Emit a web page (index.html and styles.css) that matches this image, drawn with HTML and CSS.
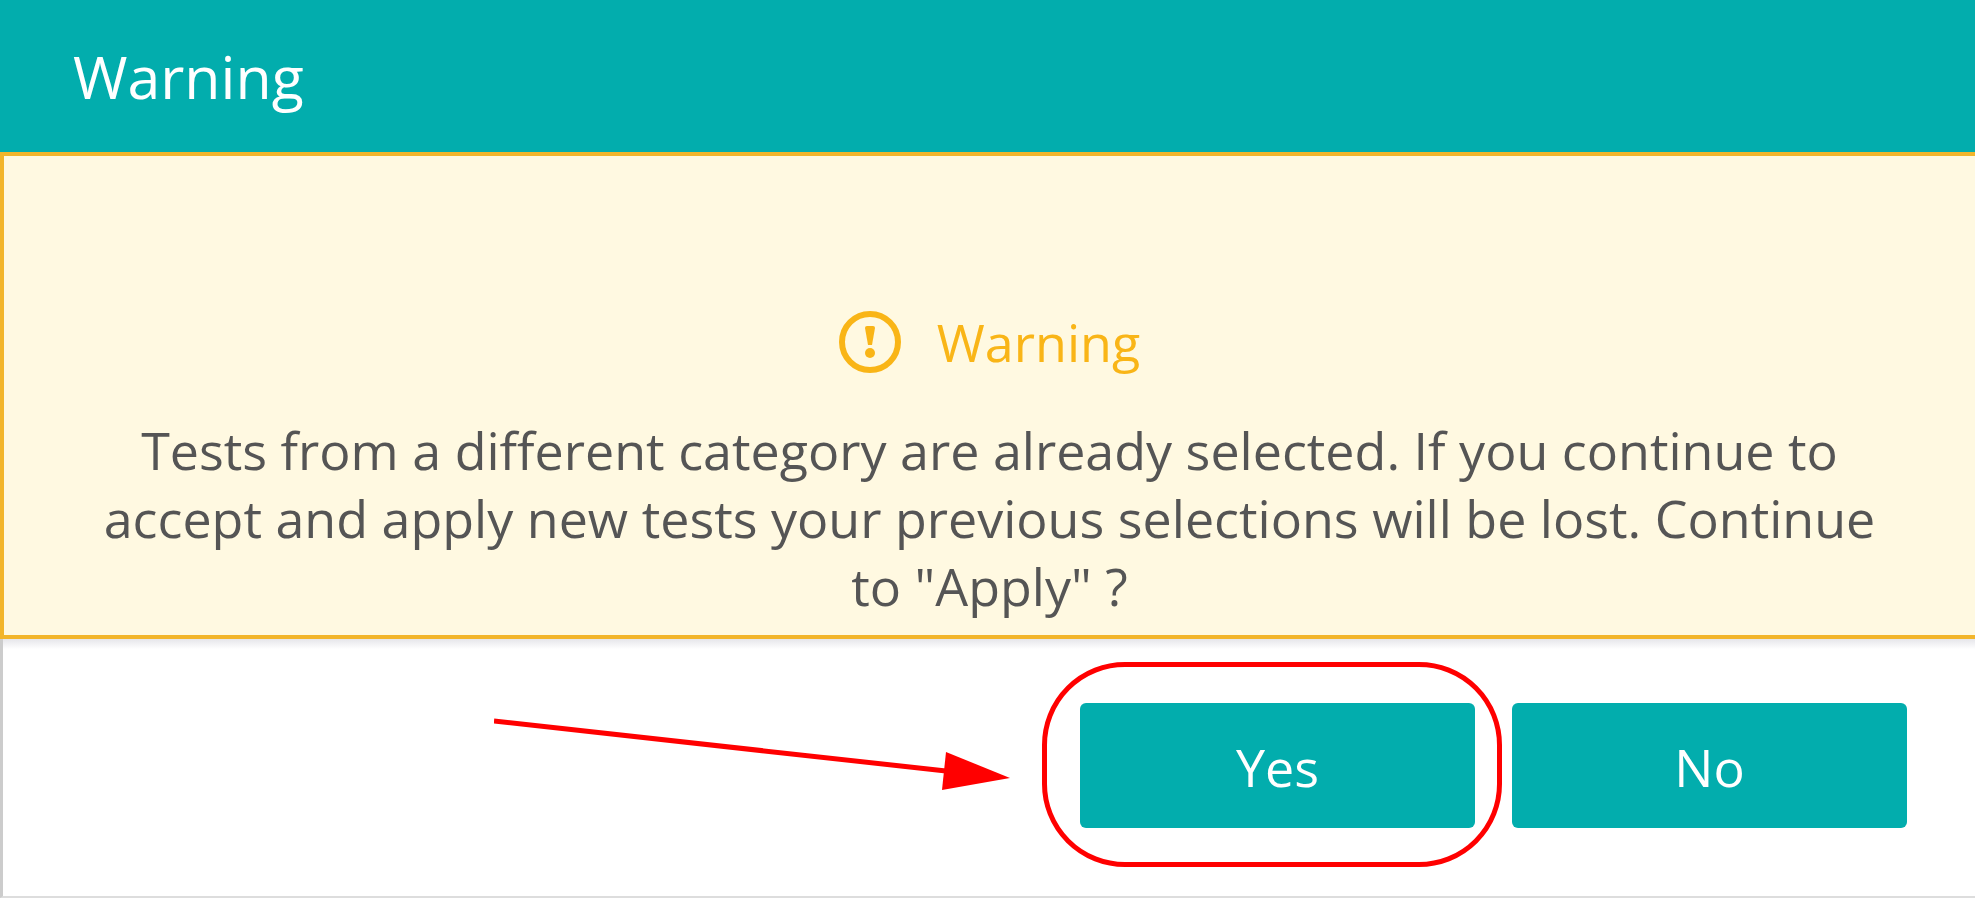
FILE: index.html
```
<!DOCTYPE html>
<html lang="en">
<head>
    <meta charset="UTF-8">
    <meta name="viewport" content="width=device-width, initial-scale=1.0">
    <title>Warning</title>
    <link rel="stylesheet" href="styles.css">
</head>
<body>
    <div class="dialog" role="alertdialog" aria-labelledby="dialog-title" aria-describedby="dialog-message">
        <header class="dialog-header">
            <h1 id="dialog-title">Warning</h1>
        </header>

        <main class="dialog-body">
            <h2 class="alert-title">
                <svg class="alert-icon" viewBox="0 0 62 62" aria-hidden="true">
                    <circle cx="31" cy="31" r="28" fill="none" stroke="currentColor" stroke-width="6"/>
                    <path d="M26 17 Q26 15 28 15 H34 Q36 15 36 17 L33 34 H29 Z" fill="currentColor"/>
                    <circle cx="31" cy="42" r="5" fill="currentColor"/>
                </svg>
                Warning
            </h2>
            <p id="dialog-message" class="alert-message">Tests from a different category are already selected. If you continue to accept and apply new tests your previous selections will be lost. Continue to "Apply" ?</p>
        </main>

        <footer class="dialog-footer">
            <div class="highlight">
                <button type="button" class="btn">Yes</button>
                <span class="highlight-ring"></span>
                <svg class="highlight-arrow" viewBox="0 0 516 72" aria-hidden="true">
                    <path d="M0 3 L452 53" fill="none" stroke="#ff0000" stroke-width="5"/>
                    <path d="M452 34 L516 60 L448 72 Z" fill="#ff0000"/>
                </svg>
            </div>
            <button type="button" class="btn">No</button>
        </footer>
    </div>
</body>
</html>
```
FILE: styles.css
```
* {
    box-sizing: border-box;
}

body {
    margin: 0;
    font-family: 'Open Sans', 'Noto Sans', sans-serif;
    font-size: 52px;
    line-height: 68px;
    color: #555;
    background: #fff;
}

.dialog {
    display: flex;
    flex-direction: column;
    min-height: 100vh;
}

.dialog-header {
    padding: 36px 73px;
    background: #02adad;
    color: #fff;
}

h1 {
    margin: 0;
    font-size: 59px;
    line-height: 80px;
    font-weight: 400;
}

.dialog-body {
    padding: 152px 90px 15px;
    background: #fff9e1;
    border: 4px solid #f2b52b;
    border-right: none;
    text-align: center;
}

.alert-title {
    display: flex;
    justify-content: center;
    align-items: center;
    gap: 36px;
    margin: 0 0 40px;
    font-size: 52px;
    font-weight: 500;
    color: #f9b517;
}

.alert-icon {
    width: 62px;
    height: 62px;
}

.alert-message {
    margin: 0;
}

.dialog-footer {
    flex: 1;
    display: flex;
    justify-content: flex-end;
    align-items: flex-start;
    gap: 37px;
    padding: 64px 68px 0;
    border-left: 3px solid #ccc;
    border-bottom: 2px solid #ddd;
    background: linear-gradient(#e6e6ea, #fff 10px);
}

.btn {
    width: 395px;
    height: 125px;
    padding: 2px 0 0;
    border: none;
    border-radius: 6px;
    background: #02adad;
    color: #fff;
    font: inherit;
    cursor: pointer;
}

.highlight {
    position: relative;
    display: flex;
}

/* red marker around the button, with the arrow pointing at it */
.highlight-ring {
    position: absolute;
    inset: -41px -27px -39px -38px;
    border: 5px solid #ff0000;
    border-radius: 83px;
    pointer-events: none;
}

.highlight-arrow {
    position: absolute;
    top: 15px;
    right: 465px;
    width: 516px;
    height: 72px;
}
```
